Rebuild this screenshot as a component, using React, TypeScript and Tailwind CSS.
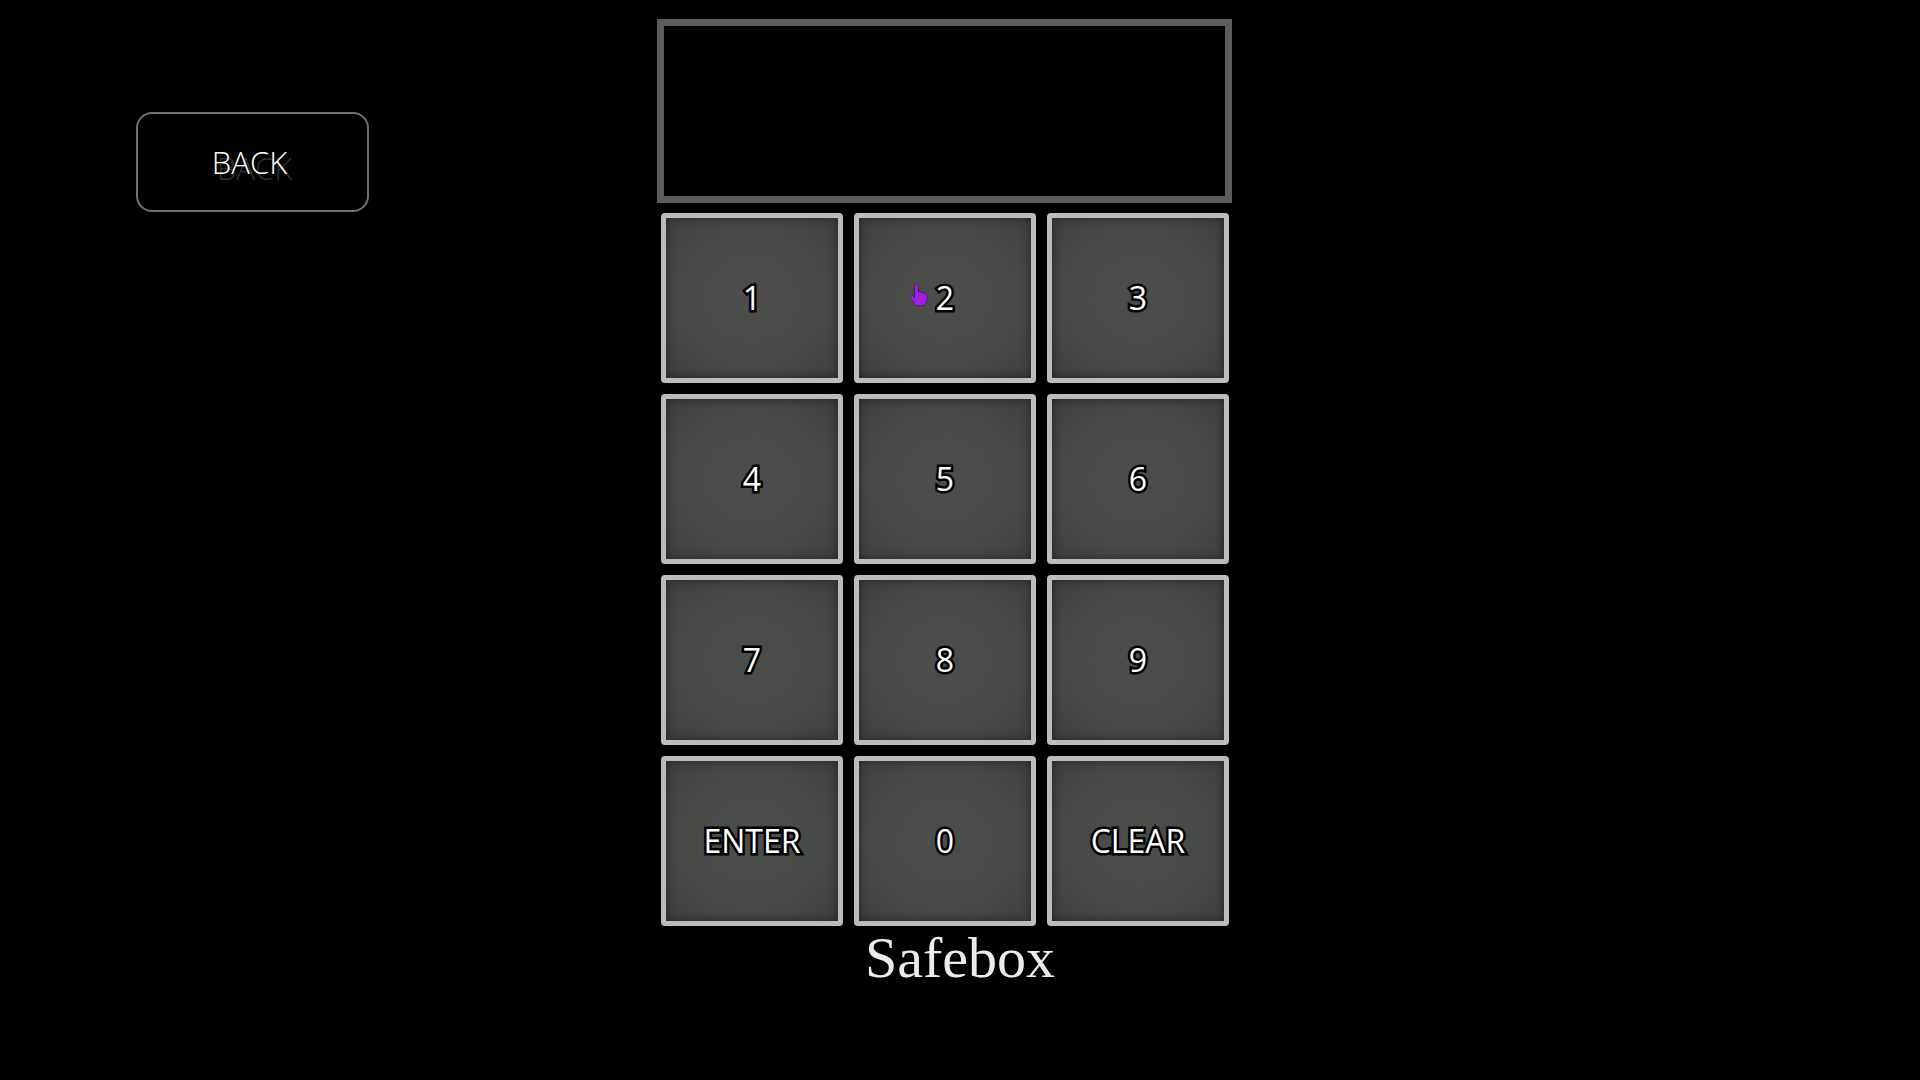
import React from "react";

const keys = ["1", "2", "3", "4", "5", "6", "7", "8", "9", "ENTER", "0", "CLEAR"];

function Hand() {
  return (
    <svg width="18" height="22" viewBox="0 0 18 22" className="absolute left-[-26px] top-[2px]">
      <path
        d="M5 2.2C5 1.1 5.7.5 6.6.5s1.6.6 1.6 1.7v6.3c.4-.6 1-.9 1.6-.8.8.1 1.3.7 1.3 1.4.4-.6 1-.8 1.6-.7.8.2 1.2.8 1.2 1.5.4-.4 1-.6 1.6-.4.8.2 1.2.9 1.2 1.7v4.6c0 3.3-2.3 5.7-5.5 5.7H8.6c-1.8 0-3.1-.7-4.1-2.1L1 14.2c-.6-.7-.5-1.7.2-2.2.7-.5 1.6-.4 2.2.3L5 14.4V2.2z"
        fill="#a21de6"
        stroke="#2e0845"
        strokeWidth="1"
      />
    </svg>
  );
}

export default function App() {
  return (
    <div className="w-full h-screen bg-black flex overflow-hidden">
      <div className="w-[657px] shrink-0 pl-[136px] pt-[112px]">
        <button className="w-[233px] h-[100px] rounded-[16px] border-2 border-[#707070] bg-black flex items-center justify-center">
          <span className="text-white text-[31px] font-light font-['Open_Sans',sans-serif] leading-none [text-shadow:5px_6px_0_rgba(110,110,110,0.45)] -ml-[6px]">
            BACK
          </span>
        </button>
      </div>
      <div className="w-[575px] shrink-0 pt-[19px] flex flex-col">
        <div className="w-[575px] h-[184px] border-[7px] border-[#5b5d5a] bg-black" />
        <div className="mt-[10px] ml-[4px] grid grid-cols-[182px_182px_182px] auto-rows-[170px] gap-x-[11px] gap-y-[11px]">
          {keys.map((k) => (
            <div
              key={k}
              className="rounded-[4px] border-[5px] border-[#bcbdba] bg-[radial-gradient(ellipse_at_center,#4c4e4b_0%,#474946_60%,#3e403d_100%)] shadow-[inset_0_0_10px_rgba(0,0,0,0.45)] flex items-center justify-center"
            >
              <span className="relative text-white text-[32px] font-['Open_Sans',sans-serif] leading-none [-webkit-text-stroke:5px_#000] [paint-order:stroke_fill]">
                {k === "2" && <Hand />}
                {k}
              </span>
            </div>
          ))}
        </div>
        <div className="mt-[3px] pl-[31px] text-center text-[58px] leading-[57px] text-[#ececec] font-['Liberation_Serif',serif]">
          Safebox
        </div>
      </div>
    </div>
  );
}
